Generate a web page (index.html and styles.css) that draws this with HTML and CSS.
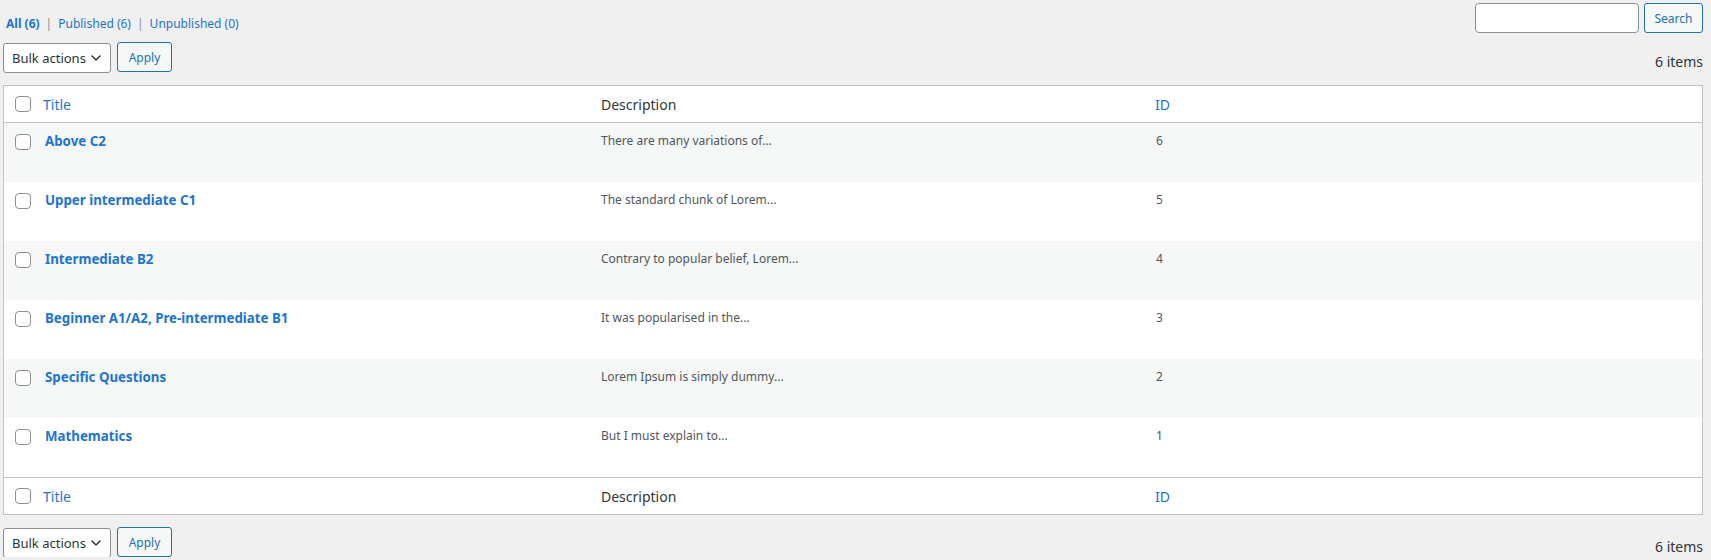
FILE: index.html
```html
<!DOCTYPE html>
<html lang="en">
<head>
<meta charset="utf-8">
<title>Levels</title>
<link rel="stylesheet" href="styles.css">
</head>
<body>
<div class="wrap">
  <div class="top">
    <ul class="views">
      <li><a class="current" href="#">All <span class="count">(6)</span></a><span class="sep">|</span></li>
      <li><a href="#">Published <span class="count">(6)</span></a><span class="sep">|</span></li>
      <li><a href="#">Unpublished <span class="count">(0)</span></a></li>
    </ul>
    <div class="search-box">
      <input class="search-input" type="search" aria-label="Search">
      <button class="btn" type="button">Search</button>
    </div>
  </div>

  <div class="tablenav">
    <div class="actions">
      <div class="select">Bulk actions
        <svg class="chev" width="10" height="6" viewBox="0 0 10 6"><path d="M1 1l4 4 4-4" fill="none" stroke="#2c3338" stroke-width="1.5" stroke-linecap="round" stroke-linejoin="round"/></svg>
      </div>
      <button class="btn" type="button">Apply</button>
    </div>
    <div class="num">6 items</div>
  </div>

  <table class="list">
    <colgroup>
      <col class="c-check"><col class="c-title"><col class="c-desc"><col>
    </colgroup>
    <thead>
      <tr>
        <td class="check"><input type="checkbox" class="cb"></td>
        <th class="title-h"><a href="#">Title</a></th>
        <th class="plain-h">Description</th>
        <th class="id-h"><a href="#">ID</a></th>
      </tr>
    </thead>
    <tbody>
      <tr class="alt"><td class="check"><input type="checkbox" class="cb"></td><td><a class="row-title" href="#">Above C2</a></td><td class="desc">There are many variations of...</td><td class="desc idv">6</td></tr>
      <tr><td class="check"><input type="checkbox" class="cb"></td><td><a class="row-title" href="#">Upper intermediate C1</a></td><td class="desc">The standard chunk of Lorem...</td><td class="desc idv">5</td></tr>
      <tr class="alt"><td class="check"><input type="checkbox" class="cb"></td><td><a class="row-title" href="#">Intermediate B2</a></td><td class="desc">Contrary to popular belief, Lorem...</td><td class="desc idv">4</td></tr>
      <tr><td class="check"><input type="checkbox" class="cb"></td><td><a class="row-title" href="#">Beginner A1/A2, Pre-intermediate B1</a></td><td class="desc">It was popularised in the...</td><td class="desc idv">3</td></tr>
      <tr class="alt"><td class="check"><input type="checkbox" class="cb"></td><td><a class="row-title" href="#">Specific Questions</a></td><td class="desc">Lorem Ipsum is simply dummy...</td><td class="desc idv">2</td></tr>
      <tr><td class="check"><input type="checkbox" class="cb"></td><td><a class="row-title" href="#">Mathematics</a></td><td class="desc">But I must explain to...</td><td class="desc idv">1</td></tr>
    </tbody>
    <tfoot>
      <tr>
        <td class="check"><input type="checkbox" class="cb"></td>
        <th class="title-h"><a href="#">Title</a></th>
        <th class="plain-h">Description</th>
        <th class="id-h"><a href="#">ID</a></th>
      </tr>
    </tfoot>
  </table>

  <div class="tablenav bottom">
    <div class="actions">
      <div class="select">Bulk actions
        <svg class="chev" width="10" height="6" viewBox="0 0 10 6"><path d="M1 1l4 4 4-4" fill="none" stroke="#2c3338" stroke-width="1.5" stroke-linecap="round" stroke-linejoin="round"/></svg>
      </div>
      <button class="btn" type="button">Apply</button>
    </div>
    <div class="num">6 items</div>
  </div>
</div>
</body>
</html>
```

FILE: styles.css
```css
html, body {
  margin: 0;
  padding: 0;
  background: #f0f0f1;
}
body {
  font-family: "Noto Sans", "Open Sans", sans-serif;
  font-size: 13px;
  color: #3c434a;
}
a { color: #1d74d4; text-decoration: none; }

.wrap {
  padding: 0 8px 0 3px;
}

.top {
  display: flex;
  justify-content: space-between;
  align-items: flex-start;
  padding-top: 3px;
  height: 30px;
}
.views {
  list-style: none;
  margin: 12px 0 0 3px;
  padding: 0;
  display: flex;
  font-size: 12px;
  line-height: 18px;
}
.views .current { font-weight: 700; }
.sep { color: #8c8f94; margin: 0 6px; }

.search-box {
  display: flex;
  gap: 5px;
}
.search-input {
  box-sizing: border-box;
  width: 164px;
  height: 30px;
  border: 1px solid #8c8f94;
  border-radius: 4px;
  background: #fff;
  margin: 0;
  padding: 0 8px;
}
.btn {
  box-sizing: border-box;
  height: 30px;
  padding: 0 9px;
  border: 1px solid #2271b1;
  border-radius: 3px;
  background: #f6f7f7;
  color: #2271b1;
  font-family: inherit;
  font-size: 12px;
  margin: 0;
}
.search-box .btn { width: 59px; }

.tablenav {
  display: flex;
  justify-content: space-between;
  align-items: flex-start;
  margin-top: 9px;
  height: 30px;
  margin-bottom: 13px;
}
.tablenav.bottom { margin-top: 12px; margin-bottom: 0; }
.actions {
  display: flex;
  align-items: flex-start;
  gap: 6px;
}
.select {
  box-sizing: border-box;
  margin-top: 1px;
  width: 108px;
  height: 30px;
  border: 1px solid #8c8f94;
  border-radius: 3px;
  background: #fff;
  color: #2c3338;
  font-size: 13px;
  display: flex;
  align-items: center;
  justify-content: space-between;
  padding: 0 9px 0 8px;
}
.chev { display: block; }
.actions .btn { width: 55px; }
.num {
  font-size: 14px;
  line-height: 20px;
  margin-top: 10px;
  color: #2c3338;
}

.list {
  width: 100%;
  table-layout: fixed;
  border-collapse: separate;
  border-spacing: 0;
  background: #fff;
  border: 1px solid #c3c4c7;
}
.c-check { width: 31px; }
.c-title { width: 556px; }
.c-desc { width: 554px; }

.list thead td, .list thead th,
.list tfoot td, .list tfoot th {
  height: 37px;
  box-sizing: border-box;
  padding: 0 8px;
  vertical-align: middle;
  text-align: left;
  font-weight: 400;
  font-size: 14px;
  color: #32373c;
}
.list thead td, .list thead th { border-bottom: 1px solid #c3c4c7; }
.list tfoot td, .list tfoot th { border-top: 1px solid #c3c4c7; }
.plain-h { padding-left: 10px !important; }
.id-h { padding-left: 10px !important; }
.list thead .check, .list tfoot .check { padding: 0 0 0 11px; }

.list tbody tr { height: 59px; }
.list tbody tr.alt { background: #f6f7f7; }
.list tbody td {
  vertical-align: top;
  padding: 8px 10px;
  line-height: 20px;
}
.list tbody td.check { padding: 11px 0 0 11px; }

.cb {
  -webkit-appearance: none;
  appearance: none;
  box-sizing: border-box;
  width: 16px;
  height: 16px;
  margin: 0;
  display: block;
  border: 1px solid #8c8f94;
  border-radius: 4px;
  background: #fff;
}

.row-title {
  font-size: 13.3px;
  font-weight: 700;
  color: #1d74d4;
}
.desc {
  font-size: 12px;
  color: #50575e;
}
.idv { padding-left: 11px !important; }
```
